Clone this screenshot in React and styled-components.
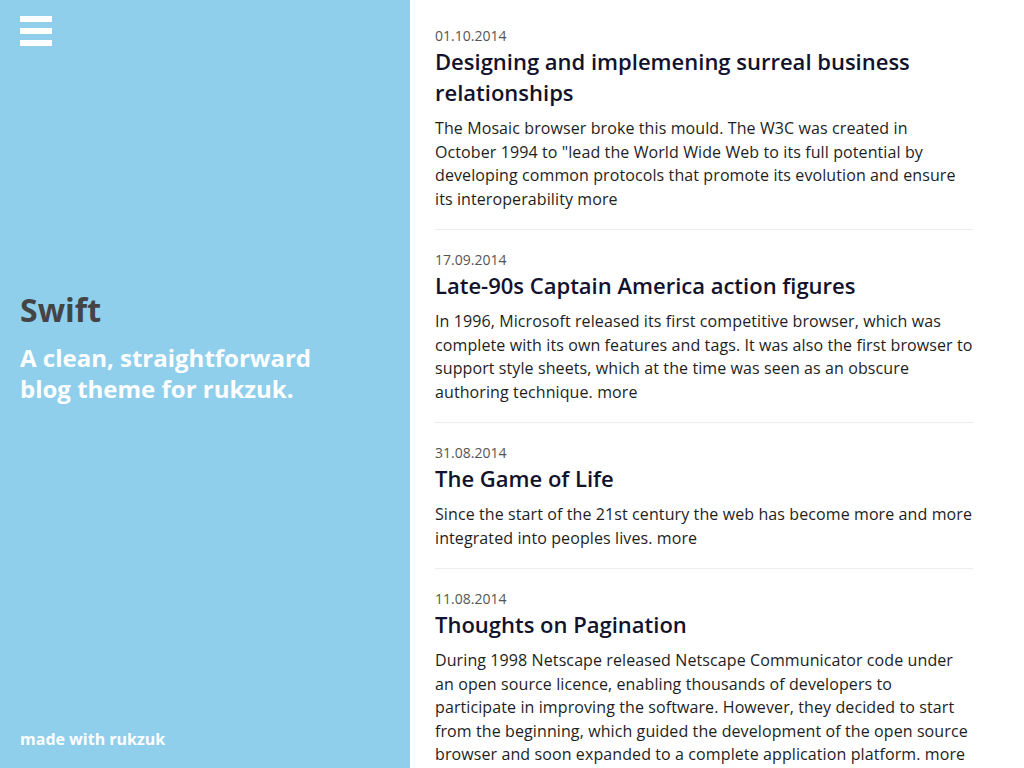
import React from 'react';
import styled, { createGlobalStyle } from 'styled-components';

const GlobalStyle = createGlobalStyle`
  html, body {
    margin: 0;
    padding: 0;
    height: 100%;
    overflow: hidden;
  }
  body {
    font-family: "Open Sans", "Noto Sans", sans-serif;
    color: #1e1e1e;
    background: #fff;
  }
`;

const Layout = styled.div`
  display: grid;
  grid-template-columns: 410px 1fr;
  height: 100vh;
`;

const Sidebar = styled.aside`
  display: flex;
  flex-direction: column;
  background: #8fcfec;
  padding: 16px 20px 18px;
  box-sizing: border-box;
`;

const MenuButton = styled.button`
  display: flex;
  flex-direction: column;
  gap: 6px;
  width: 32px;
  padding: 0;
  border: none;
  background: transparent;
  cursor: pointer;

  span {
    display: block;
    height: 6px;
    background: #fff;
  }
`;

const Intro = styled.div`
  margin-top: 244px;
  flex: 1;
  max-width: 320px;
`;

const SiteTitle = styled.h1`
  margin: 0 0 12px;
  font-size: 32px;
  line-height: 40px;
  font-weight: 700;
  color: #444;
`;

const Tagline = styled.p`
  margin: 0;
  font-size: 24px;
  line-height: 31px;
  font-weight: 700;
  color: #fff;
`;

const Credit = styled.a`
  font-size: 16px;
  line-height: 20px;
  font-weight: 700;
  color: #fff;
  text-decoration: none;
`;

const Main = styled.main`
  padding: 6px 51px 0 25px;
  overflow-y: auto;
  scrollbar-width: none;
`;

const Post = styled.article`
  padding: 20px 0 18px;
  border-bottom: 1px solid #ececec;
`;

const PostDate = styled.time`
  display: block;
  font-size: 14px;
  line-height: 20px;
  color: #555;
`;

const PostTitle = styled.h2`
  margin: 0 0 9px;
  font-size: 22px;
  line-height: 31px;
  font-weight: 600;
  color: #12122c;
`;

const PostBody = styled.p`
  margin: 0;
  font-size: 16px;
  line-height: 23.5px;
  letter-spacing: 0.1px;
  color: #1e1e1e;

  a {
    color: inherit;
    text-decoration: none;
  }
`;

const posts = [
  {
    date: '01.10.2014',
    title: 'Designing and implemening surreal business relationships',
    text: 'The Mosaic browser broke this mould. The W3C was created in October 1994 to "lead the World Wide Web to its full potential by developing common protocols that promote its evolution and ensure its interoperability',
  },
  {
    date: '17.09.2014',
    title: 'Late-90s Captain America action figures',
    text: 'In 1996, Microsoft released its first competitive browser, which was complete with its own features and tags. It was also the first browser to support style sheets, which at the time was seen as an obscure authoring technique.',
  },
  {
    date: '31.08.2014',
    title: 'The Game of Life',
    text: 'Since the start of the 21st century the web has become more and more integrated into peoples lives.',
  },
  {
    date: '11.08.2014',
    title: 'Thoughts on Pagination',
    text: 'During 1998 Netscape released Netscape Communicator code under an open source licence, enabling thousands of developers to participate in improving the software. However, they decided to start from the beginning, which guided the development of the open source browser and soon expanded to a complete application platform.',
  },
];

export default function App() {
  return (
    <>
      <GlobalStyle />
      <Layout>
        <Sidebar>
          <MenuButton aria-label="Menu">
            <span />
            <span />
            <span />
          </MenuButton>
          <Intro>
            <SiteTitle>Swift</SiteTitle>
            <Tagline>A clean, straightforward blog theme for rukzuk.</Tagline>
          </Intro>
          <div>
            <Credit href="#">made with rukzuk</Credit>
          </div>
        </Sidebar>
        <Main>
          {posts.map((p) => (
            <Post key={p.date}>
              <PostDate>{p.date}</PostDate>
              <PostTitle>{p.title}</PostTitle>
              <PostBody>
                {p.text} <a href="#">more</a>
              </PostBody>
            </Post>
          ))}
        </Main>
      </Layout>
    </>
  );
}
